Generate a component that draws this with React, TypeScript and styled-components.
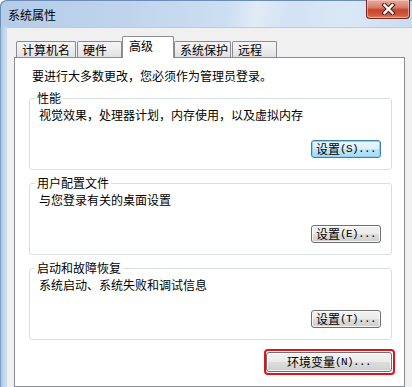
import React from "react";
import styled, { createGlobalStyle, css } from "styled-components";

const GlobalStyle = createGlobalStyle`
  html, body { margin: 0; padding: 0; background: #fff; overflow: hidden; }
  body {
    font-family: "Noto Sans CJK SC", "Noto Sans", sans-serif;
    font-size: 12px;
    color: #000;
  }
  * { box-sizing: border-box; }
`;

const Window = styled.div`
  width: 412px;
  height: 387px;
  display: flex;
  flex-direction: column;
  overflow: hidden;
  border-top-left-radius: 6px;
  background: linear-gradient(
    to right,
    #7f9fc9 0,
    #7f9fc9 1px,
    #a9c3e3 1px,
    #c3d7ee 4px,
    #c9dcf1 7px
  );
`;

const TitleBar = styled.div`
  height: 27px;
  display: flex;
  align-items: flex-start;
  padding-right: 2px;
  border-top-left-radius: 6px;
  box-shadow: inset 1px 1px 0 #6d8cb6;
  background:
    linear-gradient(100deg, rgba(255,255,255,0) 55%, rgba(255,255,255,0.35) 62%, rgba(255,255,255,0) 70%),
    linear-gradient(to right, #b4cce8 0%, #bfd4ec 30%, #cfe0f3 60%, #dae7f6 85%, #cadcf1 100%);
`;

const Title = styled.div`
  padding: 7px 0 0 8px;
  line-height: 16px;
  font-size: 12px;
  color: #000;
`;

const CloseButton = styled.div`
  margin-left: auto;
  width: 44px;
  height: 19px;
  display: flex;
  align-items: center;
  justify-content: center;
  border: 1px solid #6b2a23;
  border-top: none;
  border-radius: 0 0 4px 4px;
  background: linear-gradient(
    to bottom,
    #e9a99c 0%,
    #d8806f 40%,
    #c8442f 55%,
    #cf5a3c 85%,
    #e08a5f 100%
  );
  box-shadow: inset 0 0 0 1px rgba(255, 220, 210, 0.5);
`;

const Client = styled.div`
  flex: 1;
  margin-left: 7px;
  display: flex;
  flex-direction: column;
  padding: 8px 0 0 7px;
  background: #f0f0f0;
  border-top: 1px solid #bccbdc;
`;

const TabStrip = styled.div`
  height: 21px;
  display: flex;
  align-items: flex-end;
  gap: 1px;
  padding-left: 2px;
  position: relative;
  z-index: 1;
`;

const Tab = styled.div<{ $w: number; $selected?: boolean }>`
  width: ${(p) => p.$w}px;
  border: 1px solid #898c95;
  border-bottom: none;
  border-radius: 2px 2px 0 0;
  white-space: nowrap;
  ${(p) =>
    p.$selected
      ? css`
          height: 22px;
          margin: 0 -1px -1px -1px;
          padding: 1px 0 0 6px;
          line-height: 16px;
          background: #fff;
        `
      : css`
          height: 16px;
          padding: 0 0 0 5px;
          line-height: 15px;
          background: linear-gradient(to bottom, #f5f5f5 0%, #ececec 50%, #e1e1e1 100%);
        `}
`;

const Panel = styled.div`
  width: 391px;
  flex: 1;
  display: flex;
  flex-direction: column;
  padding: 10px 12px 0 14px;
  background: #fff;
  border: 1px solid #898c95;
`;

const Intro = styled.div`
  margin: 0 0 14px 3px;
  line-height: 16px;
`;

const Group = styled.div`
  display: flex;
  flex-direction: column;
  padding: 0 10px 11px 9px;
  border: 1px solid #d5dfe5;
  border-radius: 3px;
  & + & {
    margin-top: 13px;
  }
`;

const GroupLabel = styled.div`
  align-self: flex-start;
  margin: -9px 0 0 -4px;
  padding: 0 2px;
  line-height: 16px;
  background: #fff;
`;

const Desc = styled.div`
  margin-top: 1px;
  line-height: 16px;
`;

const Button = styled.div<{ $default?: boolean; $w: number; $h: number }>`
  width: ${(p) => p.$w}px;
  height: ${(p) => p.$h}px;
  display: flex;
  align-items: center;
  justify-content: center;
  white-space: nowrap;
  line-height: 16px;
  border-radius: 3px;
  border: 1px solid #707070;
  background: linear-gradient(to bottom, #f2f2f2 0%, #ebebeb 50%, #dddddd 51%, #cfcfcf 100%);
  box-shadow: inset 0 0 0 1px rgba(255, 255, 255, 0.75);
  ${(p) =>
    p.$default &&
    css`
      border-color: #3c7fb1;
      background: linear-gradient(to bottom, #eaf6fd 0%, #d9f0fc 50%, #bee6fd 51%, #a7d9f5 100%);
      box-shadow: inset 0 0 0 1px #8fd0f5;
    `}
`;

const GroupButton = styled(Button)`
  align-self: flex-end;
  margin-top: 17px;
`;

const Key = styled.span`
  font-family: "Liberation Mono", "DejaVu Sans Mono", monospace;
  font-size: 11px;
  letter-spacing: -0.6px;
`;

const Highlight = styled.div`
  align-self: flex-end;
  margin: 9px -3px 0 0;
  padding: 1px 1px 1px 0;
  border: 2px solid #e3121a;
  border-radius: 4px;
`;

const CloseIcon = () => (
  <svg width="15" height="12" viewBox="0 0 15 12">
    <path d="M3.5 2 L11.5 10 M11.5 2 L3.5 10" stroke="#4a2019" strokeWidth="4.4" strokeLinecap="square" />
    <path d="M3.5 2 L11.5 10 M11.5 2 L3.5 10" stroke="#ffffff" strokeWidth="2.4" strokeLinecap="square" />
  </svg>
);

const tabs: { label: string; w: number; selected?: boolean }[] = [
  { label: "计算机名", w: 60 },
  { label: "硬件", w: 45 },
  { label: "高级", w: 52, selected: true },
  { label: "系统保护", w: 57 },
  { label: "远程", w: 45 },
];

const groups = [
  { title: "性能", desc: "视觉效果，处理器计划，内存使用，以及虚拟内存", key: "(S)", def: true },
  { title: "用户配置文件", desc: "与您登录有关的桌面设置", key: "(E)" },
  { title: "启动和故障恢复", desc: "系统启动、系统失败和调试信息", key: "(T)" },
];

export default function App() {
  return (
    <>
      <GlobalStyle />
      <Window>
        <TitleBar>
          <Title>系统属性</Title>
          <CloseButton>
            <CloseIcon />
          </CloseButton>
        </TitleBar>
        <Client>
          <TabStrip>
            {tabs.map((t) => (
              <Tab key={t.label} $w={t.w} $selected={t.selected}>
                {t.label}
              </Tab>
            ))}
          </TabStrip>
          <Panel>
            <Intro>要进行大多数更改，您必须作为管理员登录。</Intro>
            {groups.map((g) => (
              <Group key={g.title}>
                <GroupLabel>{g.title}</GroupLabel>
                <Desc>{g.desc}</Desc>
                <GroupButton $w={70} $h={18} $default={g.def}>
                  设置<Key>{g.key}...</Key>
                </GroupButton>
              </Group>
            ))}
            <Highlight>
              <Button $w={126} $h={20}>
                环境变量<Key>(N)...</Key>
              </Button>
            </Highlight>
          </Panel>
        </Client>
      </Window>
    </>
  );
}
